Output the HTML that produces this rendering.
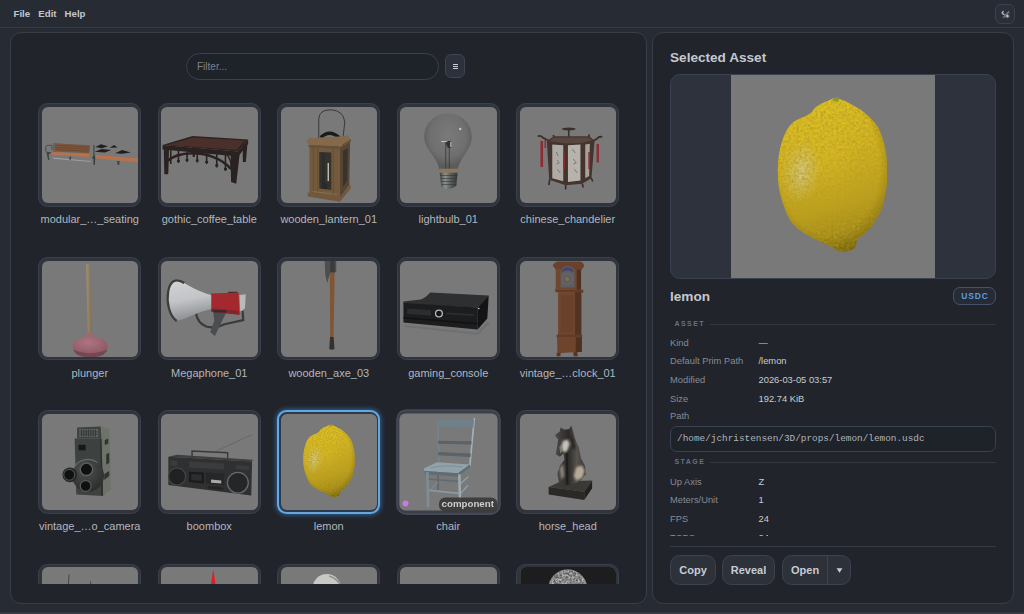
<!DOCTYPE html>
<html lang="en">
<head>
<meta charset="utf-8">
<title>Asset Browser</title>
<style>
*{box-sizing:border-box;margin:0;padding:0}
html,body{width:1024px;height:614px;overflow:hidden}
body{background:#272b34;font-family:"Liberation Sans",sans-serif;color:#c9cdd5;position:relative}
.menubar{position:absolute;left:0;top:0;width:1024px;height:28px;border-bottom:1px solid #343a46;background:#272b34}
.menubar span{position:absolute;top:7.500px;font-size:9.700px;line-height:11px;font-weight:bold;color:#c2c6cd}
.themebtn{position:absolute;left:995px;top:4px;width:20px;height:20px;border:1px solid #3c414d;border-radius:6px;background:#2b2f39}
.themebtn svg{position:absolute;left:5px;top:4.500px;width:9px;height:9px}
.panel{position:absolute;top:32px;height:571.500px;background:#21242a;border:1px solid #393d48;border-radius:11px}
#left{left:10px;width:637px}
#right{left:652px;width:362px}
.statusbar{position:absolute;left:0;top:612px;width:1024px;height:2px;background:linear-gradient(#2e313a,#3c3e49)}
.filter{position:absolute;left:186px;top:53px;width:253px;height:27px;border:1px solid #3a4150;border-radius:14px;background:#1e2229;font-size:10px;color:#7b818d;line-height:25px;padding-left:10px}
.mbtn{position:absolute;left:445px;top:54px;width:20px;height:24px;border:1px solid #3d4454;border-radius:6px;background:#2c313c}
.mbtn i{position:absolute;left:7px;width:5px;height:1px;background:#c9cdd5}
.grid{position:absolute;left:11px;top:33px;width:635px;height:551px;overflow:hidden}
.card{position:absolute;width:103px;height:103.500px;border:1px solid #3c404b;border-radius:9.500px;background:#30343d;padding:2.750px 2.250px}
.card svg{display:block;width:96.500px;height:96px;background:#797979;border-radius:6px}
.card svg>g,.preview svg>g{filter:blur(.350px)}
.card.hov{border-color:#4f5460;background:#3b404b;transform:scale(1.012)}
.card.sel{border:2px solid #66a7dd;padding:1.750px 1.250px;background:#2b3a4d;box-shadow:0 0 5px 1px rgba(60,140,220,.6)}
.lbl{position:absolute;width:120px;text-align:center;font-size:11px;line-height:14px;color:#b2b6bf;white-space:nowrap}
.dot{position:absolute;left:5px;bottom:7px;width:6px;height:6px;border-radius:3px;background:#c67be0}
.tag{position:absolute;right:2.500px;bottom:2px;height:13.400px;width:58px;text-align:center;border-radius:6.500px;background:rgba(58,58,58,.92);color:#cfcfcf;font-size:9.600px;line-height:12.500px;font-weight:bold}
h2{position:absolute;left:670px;font-size:13.600px;font-weight:bold;color:#c4c8cf;line-height:16px;white-space:nowrap}
.preview{position:absolute;left:670px;top:74px;width:326px;height:205px;border:1px solid #3a4150;border-radius:10px;background:#2d323d;overflow:hidden}
.preview svg{position:absolute;left:60px;top:0;width:204px;height:204px;background:#797979}
.badge{position:absolute;left:953px;top:287px;width:43px;height:18px;border:1px solid #47526a;border-radius:7px;background:#262b35;color:#5b9cd8;font-size:8.5px;font-weight:bold;letter-spacing:.9px;text-align:center;line-height:16px;padding-left:1px}
.sec{position:absolute;left:674.500px;font-size:7px;font-weight:bold;letter-spacing:1.450px;color:#6a707c;line-height:10px}
.sec:after{content:"";position:absolute;left:35.500px;top:5px;width:286px;height:1px;background:#323742}
.k,.v{position:absolute;font-size:9.35px;line-height:12px;white-space:nowrap}
.k{left:670px;color:#858b97}
.v{left:758.500px;color:#c9ccd3}
.path{position:absolute;left:670px;top:425.500px;width:326px;height:26px;border:1px solid #3a4150;border-radius:7px;background:#1e2229;font-family:"Liberation Mono",monospace;font-size:9.400px;color:#b0b5bf;line-height:24px;padding-left:6px;white-space:nowrap}
.clip{position:absolute;left:660px;top:300px;width:346px;height:235.500px;overflow:hidden}
.hr{position:absolute;left:670px;top:546px;width:326px;height:1px;background:#343a46}
.btn{position:absolute;top:555px;height:30px;border:1px solid #3c424f;border-radius:9.500px;background:#2c313a;color:#c9ccd3;font-size:11px;font-weight:bold;line-height:28px;text-align:center}
</style>
</head>
<body>
<div class="menubar"><span style="left:13.500px">File</span><span style="left:38.300px">Edit</span><span style="left:64.500px">Help</span></div>
<div class="themebtn"><svg viewBox="0 0 12 12"><path d="M4.400 1.200A2.700 2.700 0 1 0 5.600 5.400 2.200 2.200 0 0 1 4.400 1.200z" fill="#aeb2ba"/><circle cx="8.600" cy="8.200" r="1.500" fill="#d3d6dc"/><path d="M8.600 5.300v5.800M5.700 8.200h5.800M6.600 6.200l4 4M10.600 6.200l-4 4" stroke="#b9bdc5" stroke-width=".6"/><path d="M10.400 1.600L2.600 9.800M11.200 2.600L3.600 10.800" stroke="#c3c6cd" stroke-width=".75"/></svg></div>
<div class="panel" id="left"></div>
<div class="panel" id="right"></div>
<div class="filter">Filter...</div>
<div class="mbtn"><i style="top:9px"></i><i style="top:11px"></i><i style="top:13px"></i></div>
<div class="grid" id="grid">
<div class="card" style="left:27.25px;top:70.25px"><svg viewBox="0 0 96 96"><g>
<path d="M3.5 44.5V40.2Q3.5 38.3 5.5 38.3H9.6V43" fill="none" stroke="#4a4e4e" stroke-width="1"/>
<path d="M4 44.5L9.5 45.5 6.5 47.5 7.2 53H5.8L4.6 47z" fill="#3c4542"/>
<path d="M12.5 36.3L47.7 38.3 47 46.2 12.5 44.6z" fill="#7b553c"/>
<path d="M12.5 38.3L47.5 40.2M12.5 40.4L47.3 42.2M12.5 42.5L47.1 44.2" stroke="#5e3f2c" stroke-width=".5"/>
<path d="M11.6 36V45" stroke="#54575a" stroke-width="1.1"/>
<path d="M9.4 45L47 47 47 49.9 9.4 47.7z" fill="#b6714d"/>
<path d="M11 50.6L48.5 54 48.5 55 11 51.8z" fill="#9ba19d"/>
<path d="M27.5 49.5L29 49.6 28.3 53.2 26.8 52z" fill="#3c4542"/>
<path d="M51.6 38V49" stroke="#4a4a4c" stroke-width="1.3"/>
<path d="M49.5 50.5L53.5 47.6 53 51 52.6 58H51.4L51.2 52z" fill="#34403c"/>
<path d="M53 47.7L95.6 51.4V55.2L53 51.2z" fill="#b6714d"/>
<path d="M74.5 54L77.5 54.3 76.9 58H75.6z" fill="#3c4542"/>
<path d="M53.2 40L58.7 37.2 65.7 39.2 59.5 41.2z" fill="#1f1f20"/>
<path d="M52.4 44.8L59.5 42 69 43 62.6 45.6z" fill="#1f1f20"/>
<path d="M67.3 40.8L72 38 75.2 40.5z" fill="#1f1f20"/>
<path d="M72.8 46.3L79.8 43 88.6 45.5 80 46.8z" fill="#1f1f20"/>
</g></svg></div>
<div class="lbl" style="left:18.75px;top:179px">modular_…_seating</div>
<div class="card" style="left:146.75px;top:70.25px"><svg viewBox="0 0 96 96"><g>
<path d="M81.4 38L86.3 36 84.6 55H81.6z" fill="#2a2221"/>
<path d="M31 40L34 40 33.5 50H31.5z" fill="#2a2221"/>
<path d="M1.3 38L31.3 29 86.9 32.4 76.7 44.6z" fill="#2c2321"/>
<path d="M6 38L32 30.4 83.5 33.4 75.5 43z" fill="#4b2f2a"/>
<path d="M1.3 38L76.7 44.6 86.9 32.4V36.800L76.7 49.600 1.3 42.600z" fill="#2a2221"/>
<path d="M2.5 41L7.8 42 7 67.3H3.1z" fill="#2a2322"/>
<path d="M69.4 47L78.4 47 75 76.7 69.8 75z" fill="#2a2221"/>
<path d="M4.7 55Q14 46.5 31 46.3 55 46.5 70 62" fill="none" stroke="#2a2221" stroke-width="2.6"/>
<path d="M9.5 43V57M17.2 44V56M25.8 44.5V55M36 45.5V55.5M45.4 46.5V57M55.5 47V60.5M64.2 47.5V64" stroke="#2a2221" stroke-width="1.6"/>
<path d="M15.8 54h2.8M24.4 53h2.8M34.6 53.5h2.8M44 55h2.8M54 58.5h3M62.7 62h3" stroke="#2a2221" stroke-width="2.2"/>
<path d="M65 47Q70 52 70 60M78 47Q80 44 82 40" stroke="#2a2221" stroke-width="1.5" fill="none"/>
</g></svg></div>
<div class="lbl" style="left:138.25px;top:179px">gothic_coffee_table</div>
<div class="card" style="left:266.25px;top:70.25px"><svg viewBox="0 0 96 96"><g>
<path d="M37.5 31V12Q38 2.5 50 2.8 62 3.5 63.6 15L61.8 30" fill="none" stroke="#2b2a29" stroke-width=".8"/>
<path d="M39.5 30.5Q48 22 58 30.5" fill="none" stroke="#1b1b1c" stroke-width="3.2"/>
<path d="M58.7 39L68.9 33 68 78.2 58.7 90.8z" fill="#574532"/>
<path d="M61.8 43.8L66.5 41.2 66 73.5 61.8 80z" fill="#353430"/>
<path d="M28.2 37.5L58.7 39V90.8L28.2 86.8z" fill="#735a3d"/>
<path d="M38 45L50 45.6V83L38 81.6z" fill="#33322f"/>
<path d="M42 46V82" stroke="#2d2c29" stroke-width="3"/>
<path d="M47 56V74" stroke="#cfccbc" stroke-width="1.3"/>
<path d="M41 76Q44 73 46 78V82L41 81z" fill="#2a2927"/>
<path d="M32 39V87M36.5 40V88M52 41V89" stroke="#5d4930" stroke-width=".6"/>
<path d="M31 84.5L56 87.5" stroke="#9a8262" stroke-width=".5"/>
<path d="M25 33.6L29 31.3 65 29 69.6 32 58.7 39.5 27.4 38z" fill="#84694a"/>
<path d="M27.4 38L58.7 39.5 69.6 32V34.5L58.7 42 27.4 40.3z" fill="#65503a"/>
<circle cx="29.5" cy="32" r="1.6" fill="#84694a"/><circle cx="65.5" cy="29.5" r="1.6" fill="#84694a"/><circle cx="59" cy="38" r="1.6" fill="#8a6f4e"/>
<path d="M26.6 85.6L58.7 90.4 69.4 77.5V81.5L58.7 94.8 26.6 89.5z" fill="#70583c"/>
</g></svg></div>
<div class="lbl" style="left:257.75px;top:179px">wooden_lantern_01</div>
<div class="card" style="left:385.75px;top:70.25px"><svg viewBox="0 0 96 96"><g>
<defs><radialGradient id="bg1" cx=".5" cy=".4" r=".55"><stop offset="0" stop-color="#7a7a7a"/><stop offset=".7" stop-color="#6f6f6f"/><stop offset="1" stop-color="#5b5b5b"/></radialGradient>
<linearGradient id="bg2" x1="0" x2="1"><stop offset="0" stop-color="#3f4343"/><stop offset=".3" stop-color="#8b9090"/><stop offset=".6" stop-color="#5a5f5f"/><stop offset="1" stop-color="#343737"/></linearGradient></defs>
<path d="M47.7 6.5C61 6.5 71.5 17 71.5 30 71.5 42 60 50 57.5 62H39C37 50 24 42 24 30 24 17 34.500 6.500 47.700 6.500z" fill="url(#bg1)"/>
<path d="M45.5 36V62M49 38V62" stroke="#3a3a3a" stroke-width=".9"/>
<path d="M44.500 34h6v7h-3z" fill="#333"/>
<path d="M41 34.500h6M50.500 35v5" stroke="#d8d8d8" stroke-width=".8"/>
<circle cx="60" cy="22" r="1.200" fill="#c9c9c9"/>
<path d="M39.800 61.800H57.200L56.500 66H40.300z" fill="#8c775b"/>
<path d="M39.500 65.700H57.300L56 79Q49 84.500 41 80z" fill="url(#bg2)"/>
<path d="M40 68.500H57M40.300 71.500H56.800M40.600 74.500H56.500M41 77.500H56.200" stroke="#2f3232" stroke-width=".8" opacity=".7"/>
</g></svg></div>
<div class="lbl" style="left:377.25px;top:179px">lightbulb_01</div>
<div class="card" style="left:505.25px;top:70.25px"><svg viewBox="0 0 96 96"><g>
<ellipse cx="48.5" cy="22" rx="7" ry="1.5" fill="#3a302b"/>
<path d="M48.500 22.500V30" stroke="#3a302b" stroke-width="1.600"/>
<path d="M17.500 29.500Q20 28 22.500 30.500L29 34M82 30Q79 29 77 31.500L73 34M33 28l1 3M69 27.500l-.5 3" stroke="#3d2e29" stroke-width="1.800" fill="none"/>
<path d="M26.600 34L33.600 29.200 68.900 29.200 74.300 33.600 71.200 71.200 61.800 76.700 45.400 78.200 29 72.800z" fill="#44342d"/>
<path d="M33.600 30.500H68.500L72 33.500 61 36 44.600 36.500 29 34z" fill="#59473f"/>
<path d="M32 37.500L43 38.300V74.300L32 71.200z" fill="#aeaba6"/>
<path d="M47.700 38.300L60.200 37.500V73.500L47.700 75z" fill="#b6b3ad"/>
<path d="M65 37.500L69.600 36.800 68.900 68.900 65 71.200z" fill="#a5a29c"/>
<path d="M36 45l2 4M37 53l2 3-3 1M37 62l3 4M52 42l3 4M53 52l3 4-3 1M54 62l3 4" stroke="#6e6963" stroke-width=".8" fill="none"/>
<path d="M21.500 34V60" stroke="#8e2a31" stroke-width="2.600"/>
<path d="M25 33V41" stroke="#8e2a31" stroke-width="1.400"/>
<path d="M43.800 46V62" stroke="#8e2a31" stroke-width="1.800"/>
<path d="M68.800 45V62" stroke="#8e2a31" stroke-width="1.500"/>
<path d="M77.500 37V55.500" stroke="#8e2a31" stroke-width="2.400"/>
<path d="M29.500 72.500l-1 5.500M45.400 78V82.500M62 76.500l1 4M71 71l1.500 3.500" stroke="#3a2d28" stroke-width="1.600"/>
</g></svg></div>
<div class="lbl" style="left:496.75px;top:179px">chinese_chandelier</div>
<div class="card" style="left:27.25px;top:223.95px"><svg viewBox="0 0 96 96"><g>
<defs><linearGradient id="pl1" x1="0" x2="1"><stop offset="0" stop-color="#a3916f"/><stop offset="1" stop-color="#7f6e53"/></linearGradient>
<radialGradient id="pl2" cx=".45" cy=".3" r=".7"><stop offset="0" stop-color="#ad7581"/><stop offset="1" stop-color="#8a5662"/></radialGradient></defs>
<path d="M43.800 3.500Q45.700 2.500 47.600 3.500L49.600 73H45.600z" fill="url(#pl1)"/>
<path d="M44 72.500Q47.500 70.500 51 72.500L52 78H43z" fill="#a06672"/>
<path d="M30.500 85.500Q31 76.500 48 75.500 65 76.500 65.500 85.500 65 93.500 48 95 31 93.500 30.500 85.500z" fill="url(#pl2)"/>
<path d="M31 88.500Q48 96 65 88.500 63 96 48 96.500 33 96 31 88.500z" fill="#764753"/>
</g></svg></div>
<div class="lbl" style="left:18.75px;top:332.7px">plunger</div>
<div class="card" style="left:146.75px;top:223.95px"><svg viewBox="0 0 96 96"><g>
<defs><linearGradient id="mg1" x1="0" y1="0" x2=".2" y2="1"><stop offset="0" stop-color="#d2d4d6"/><stop offset=".55" stop-color="#c2c4c7"/><stop offset="1" stop-color="#8f9295"/></linearGradient></defs>
<path d="M34.800 52Q36 62 45 65.500 54 68 63.200 63.200L82 59.200 81.400 50" fill="none" stroke="#393b3e" stroke-width="2.200"/>
<path d="M52 50L64.800 52 59.200 63.200 53.700 75 49 71 53 60z" fill="#4b4d50"/>
<path d="M78.200 34L84.500 33.200 83.700 47.400 79 50.500z" fill="#b7b9bb"/>
<path d="M67 30.800H76V32.500H67z" fill="#2c2c2e"/>
<path d="M49.800 32.400L77.400 31.600 78.200 53.700 49.800 50.500z" fill="#a3292e"/>
<path d="M49.800 47L78 50 78.200 53.700 49.800 50.500z" fill="#86242a"/>
<path d="M52 49h13v2.500h-13z" fill="#3a2a2c"/>
<path d="M17 18.500C9 21 5 32 6.500 41 8 52 12 59 17 59.500 25 58 38 50 50 48.200V34C38 31 26 24 17 18.500z" fill="url(#mg1)"/>
<path d="M23 22C15 16.500 9 19.500 7 30 5 41 8 55 15.500 60" fill="none" stroke="#3a3c3e" stroke-width="2.200"/>
</g></svg></div>
<div class="lbl" style="left:138.25px;top:332.7px">Megaphone_01</div>
<div class="card" style="left:266.25px;top:223.95px"><svg viewBox="0 0 96 96"><g>
<path d="M48.500 8H53.500L52.200 78H49z" fill="#7f5535"/>
<path d="M48.800 76H52.400L53.200 88Q51 89.500 48 88z" fill="#34312e"/>
<path d="M43.500 0H55V11L52 12 49 11.500 46 22 44 14z" fill="#4c4e50"/>
<path d="M49 0H53.500V11H49z" fill="#3a3b3c"/>
</g></svg></div>
<div class="lbl" style="left:257.75px;top:332.7px">wooden_axe_03</div>
<div class="card" style="left:385.75px;top:223.95px"><svg viewBox="0 0 96 96"><g>
<path d="M4 64L77 71.500 88 60 89 63 78 74 5 66z" fill="#6a6a6a" opacity=".6"/>
<path d="M3.200 40.500L20.500 38.500Q25 37 30 31.400L88.500 34.500 77.400 46.600 3.200 43.500z" fill="#2d2f31"/>
<path d="M3.200 42L77.400 46.600V68.500L3.200 61.400z" fill="#1c1d1f"/>
<path d="M77.400 46.600L88.500 34.500 87 57.500 77.400 68.500z" fill="#131415"/>
<path d="M7 47.400L30.800 49V54.500L7 53z" fill="#2c2d30"/>
<path d="M46 51.500L74 53.300V55L46 53.200z" fill="#2c2d30"/>
<path d="M3.200 56L77.400 62V63.500L3.200 57.500z" fill="#111213"/>
<circle cx="38.700" cy="52.500" r="3.400" fill="#151516" stroke="#b4b4b4" stroke-width="1.400"/>
<circle cx="78.500" cy="47.500" r=".8" fill="#d0d0d0"/>
</g></svg></div>
<div class="lbl" style="left:377.25px;top:332.7px">gaming_console</div>
<div class="card" style="left:505.25px;top:223.95px"><svg viewBox="0 0 96 96"><g transform="translate(0 -1.800)">
<path d="M32.400 6.300Q35 2.500 38 2.400H60Q63 3 64 7L60.800 11 35.500 10.300z" fill="#6a412c"/>
<path d="M35.500 9.500L60.800 10.300V30.800L35.500 30z" fill="#70462e"/>
<path d="M56.500 10.200L60.800 10.300V30.800L56.500 30.600z" fill="#503222"/>
<path d="M40.300 28.400V13Q40.500 7 47.400 6.800 54.300 7 54.500 13V28.400z" fill="#5e5d61"/>
<path d="M41.300 13Q41.500 8 47.400 7.800 53.300 8 53.500 13 47.400 9.500 41.300 13z" fill="#46466a"/>
<circle cx="47" cy="19.700" r="2" fill="#7f7048"/>
<circle cx="47" cy="19.700" r="5.500" fill="none" stroke="#6c6a66" stroke-width="1"/>
<path d="M34.500 30L63 30.500V33.500L35.500 33z" fill="#623c28"/>
<path d="M37.800 33H61V76H37.800z" fill="#70462e"/>
<path d="M54.800 33H61V76H54.800z" fill="#523323"/>
<path d="M40.500 36H53V73H40.500z" fill="#6a412b"/>
<path d="M36.300 75.500H62V78.500H36.300z" fill="#623c28"/>
<path d="M36.800 78H61.600V92.600L37.200 94z" fill="#6e442d"/>
<path d="M55.500 78H61.600V92.600L55.500 93z" fill="#4e3020"/>
<path d="M36.500 93.500L40.500 93.800 40 97H36.500zM53 93l4-.3.500 4.300H53.500z" fill="#573523"/>
</g></svg></div>
<div class="lbl" style="left:496.75px;top:332.7px">vintage_…clock_01</div>
<div class="card" style="left:27.25px;top:377.25px"><svg viewBox="0 0 96 96"><g>
<defs><radialGradient id="cm1" cx=".4" cy=".3" r=".75"><stop offset="0" stop-color="#4d5150"/><stop offset=".6" stop-color="#383b3a"/><stop offset="1" stop-color="#2a2c2b"/></radialGradient></defs>
<path d="M59.200 12.600L67.100 15 68.700 75.800 60.800 82z" fill="#6d7369"/>
<path d="M62.500 26l3.500-1.500v5L62.500 31zM64 40l3-1v10l-3 1.500zM62 60l5-3v5l-5 4z" fill="#30332f"/>
<path d="M34.800 13.400L58.500 12.600 59.200 24.500H34.800z" fill="#3e4340"/>
<path d="M37 15.200H56V22.800H37z" fill="#6c726c"/>
<path d="M37 17.100h19M37 19h19M37 20.900h19M39.300 15.200v7.600M41.600 15.200v7.600M43.900 15.200v7.600M46.200 15.200v7.600M48.500 15.200v7.600M50.800 15.200v7.600M53.100 15.200v7.600" stroke="#363a37" stroke-width="1"/>
<path d="M32.400 24.500H59.200L60.800 82 34 80.600z" fill="#3d4240"/>
<path d="M58 24.500H59.200L60.800 82 59 81z" fill="#2c2f2d"/>
<path d="M36.300 30.800H43.400V36.300H36.300z" fill="#171918"/>
<circle cx="45.800" cy="61.600" r="16" fill="url(#cm1)"/>
<path d="M31 55A16 16 0 0 1 55 48.500" fill="none" stroke="#696e6b" stroke-width="1.200"/>
<circle cx="27.600" cy="60.800" r="7.400" fill="#262828"/>
<circle cx="27" cy="60.800" r="5.400" fill="#0f1010" stroke="#5a5e5c" stroke-width=".9"/>
<circle cx="44.200" cy="55.300" r="6.200" fill="#0f1010" stroke="#5d615f" stroke-width="1.300"/>
<circle cx="43.400" cy="72" r="5.400" fill="#0f1010" stroke="#585c5a" stroke-width="1.200"/>
</g></svg></div>
<div class="lbl" style="left:18.75px;top:486px">vintage_…o_camera</div>
<div class="card" style="left:146.75px;top:377.25px"><svg viewBox="0 0 96 96"><g>
<path d="M55.300 37L90.800 20.500" stroke="#5c5c5c" stroke-width=".6"/>
<path d="M30.800 43V37L66.400 38.700V45.500" fill="none" stroke="#38393a" stroke-width="1.400"/>
<path d="M7.100 42.700L15.800 40.800 91.600 45.800 90.800 47.600z" fill="#3d3e3f"/>
<path d="M7.100 42.700L90.800 47.400 90 81.400 7.100 71z" fill="#2f3031"/>
<path d="M28 47.500L63 49.500V55.500L28 53.500z" fill="#3b3c3d"/>
<path d="M9 46.500L16 47V52L9 51.500zM75 51L88 52V56L75 55z" fill="#3a3b3c"/>
<circle cx="15.800" cy="62.400" r="8.600" fill="#202121" stroke="#454647" stroke-width="1.200"/>
<circle cx="76.600" cy="68.700" r="10.400" fill="#252627" stroke="#68696a" stroke-width="1.300"/>
<path d="M27.600 57.700L42.700 58.500V69.500L27.600 68z" fill="#1b1b1c"/>
<path d="M30 60L40.500 60.600V67L30 66z" fill="#2c2d2e"/>
<path d="M44.500 58.500L63 59.500V71L44.500 69.500z" fill="#262728"/>
<path d="M49.800 65.600L60 66.400V69.500L49.800 68.700z" fill="#a9a9a9"/>
<path d="M47 72L62 73.500V76L47 74.500z" fill="#232425"/>
</g></svg></div>
<div class="lbl" style="left:138.25px;top:486px">boombox</div>
<div class="card sel" style="left:266.25px;top:377.25px"><svg viewBox="0 0 96 96"><g>
<defs>
<linearGradient id="lm0" x1=".4" y1="0" x2=".6" y2="1"><stop offset="0" stop-color="#e8cb26"/><stop offset=".35" stop-color="#dcbb22"/><stop offset=".7" stop-color="#c2a31c"/><stop offset=".9" stop-color="#a28a17"/><stop offset="1" stop-color="#857413"/></linearGradient>
<radialGradient id="lm1" cx=".47" cy=".45" r=".56"><stop offset="0" stop-color="#000" stop-opacity="0"/><stop offset=".75" stop-color="#5a4800" stop-opacity=".05"/><stop offset="1" stop-color="#5a4800" stop-opacity=".42"/></radialGradient>
<radialGradient id="lm2" cx=".5" cy=".5" r=".5"><stop offset="0" stop-color="#d9d4a4" stop-opacity=".85"/><stop offset=".6" stop-color="#d8cc88" stop-opacity=".4"/><stop offset="1" stop-color="#d9d29a" stop-opacity="0"/></radialGradient>
<filter id="lmf" x="0" y="0" width="1" height="1"><feTurbulence type="fractalNoise" baseFrequency=".8" numOctaves="2" seed="3"/><feColorMatrix values="0 0 0 0 0.5  0 0 0 0 0.36  0 0 0 0 0.02  1.2 1.2 0 0 -0.88"/><feComposite in2="SourceGraphic" operator="in"/></filter>
<clipPath id="lmc"><path d="M49.3 10.8C50.5 10.8 51.7 11.5 53.0 12.0C54.3 12.5 55.3 13.1 56.9 14.0C58.5 14.9 60.3 15.6 62.4 17.4C64.5 19.2 67.6 21.8 69.3 24.9C71.0 28.0 72.1 32.1 72.8 36.0C73.5 39.9 73.4 45.7 73.4 48.5C73.5 51.3 73.5 50.5 73.1 53.0C72.6 55.5 72.0 60.1 70.7 63.3C69.4 66.5 67.0 70.0 65.2 72.3C63.4 74.5 61.0 75.6 60.0 76.8C59.0 78.0 59.2 78.7 58.9 79.5C58.6 80.3 59.0 81.0 58.0 81.6C57.0 82.2 54.4 83.3 52.8 83.3C51.2 83.3 49.8 82.4 48.5 81.8C47.2 81.2 47.1 80.9 45.2 79.9C43.3 78.9 39.5 77.4 36.9 75.8C34.2 74.2 31.4 72.8 29.3 70.3C27.2 67.8 25.7 64.2 24.5 60.6C23.3 57.0 22.3 52.9 22.1 48.6C21.9 44.3 22.1 38.9 23.1 34.7C24.1 30.5 25.6 26.3 27.9 23.6C30.2 20.9 35.0 19.8 36.9 18.4C38.8 17.0 38.7 16.2 39.5 15.5C40.3 14.8 40.7 14.6 41.7 14.0C42.7 13.4 44.2 12.7 45.5 12.2C46.8 11.7 48.0 10.8 49.3 10.8z"/></clipPath>
</defs>
<path d="M49.3 10.8C50.5 10.8 51.7 11.5 53.0 12.0C54.3 12.5 55.3 13.1 56.9 14.0C58.5 14.9 60.3 15.6 62.4 17.4C64.5 19.2 67.6 21.8 69.3 24.9C71.0 28.0 72.1 32.1 72.8 36.0C73.5 39.9 73.4 45.7 73.4 48.5C73.5 51.3 73.5 50.5 73.1 53.0C72.6 55.5 72.0 60.1 70.7 63.3C69.4 66.5 67.0 70.0 65.2 72.3C63.4 74.5 61.0 75.6 60.0 76.8C59.0 78.0 59.2 78.7 58.9 79.5C58.6 80.3 59.0 81.0 58.0 81.6C57.0 82.2 54.4 83.3 52.8 83.3C51.2 83.3 49.8 82.4 48.5 81.8C47.2 81.2 47.1 80.9 45.2 79.9C43.3 78.9 39.5 77.4 36.9 75.8C34.2 74.2 31.4 72.8 29.3 70.3C27.2 67.8 25.7 64.2 24.5 60.6C23.3 57.0 22.3 52.9 22.1 48.6C21.9 44.3 22.1 38.9 23.1 34.7C24.1 30.5 25.6 26.3 27.9 23.6C30.2 20.9 35.0 19.8 36.9 18.4C38.8 17.0 38.7 16.2 39.5 15.5C40.3 14.8 40.7 14.6 41.7 14.0C42.7 13.4 44.2 12.7 45.5 12.2C46.8 11.7 48.0 10.8 49.3 10.8z" fill="url(#lm0)"/>
<g clip-path="url(#lmc)">
<ellipse cx="33" cy="45.500" rx="9" ry="15" fill="url(#lm2)" transform="rotate(8 33 45.500)"/>
<rect x="20" y="9" width="56" height="76" fill="#fff" filter="url(#lmf)"/>
<rect x="20" y="9" width="56" height="76" fill="url(#lm1)"/>
</g>
<path d="M47.800 12Q48.600 9.800 50.800 10.600L50.600 12.600z" fill="#8a9636"/>
</g></svg></div>
<div class="lbl" style="left:257.75px;top:486px">lemon</div>
<div class="card hov" style="left:385.75px;top:377.25px"><svg viewBox="0 0 96 96"><g>
<path d="M37 59H38.800V76H37z" fill="#5d6b71"/>
<path d="M68 53H69.700L67.300 79H65.800z" fill="#6d7d84"/>
<path d="M37.600 6.300L38.900 47.500" stroke="#74858d" stroke-width="1.500"/>
<path d="M73.800 4.700L69.300 52" stroke="#a2b2b9" stroke-width="1.600"/>
<path d="M37 6.300H73.500L72.700 14.200 37.600 13.400z" fill="#6f8088"/>
<path d="M38 26.900L71 27.600 70.800 30.800 38 30z" fill="#596369"/>
<path d="M38 38L70.300 39.500 70 43 38.200 41.400z" fill="#596369"/>
<path d="M60 69.500L68 62.400M60.300 79L67.500 71" stroke="#8fa0a7" stroke-width="1.300"/>
<path d="M27.600 64.800L57.700 67.100" stroke="#5f6d73" stroke-width="1.600"/>
<path d="M28.400 75.800L58.500 79" stroke="#8b9ca3" stroke-width="1.500"/>
<path d="M30 76L37.500 68" stroke="#7b8b92" stroke-width="1.200"/>
<path d="M23.700 54.500L37 48.200 69.500 50.500 57.700 59.200 24.500 57z" fill="#91a2aa"/>
<path d="M30 54Q45 50 62 53" stroke="#7a8a92" stroke-width=".8" fill="none"/>
<path d="M24.500 57L57.700 59.200 69.500 50.500V53L57.700 62.500 25 60z" fill="#5f6d73"/>
<path d="M26 58H28.600L29.400 92.400H27z" fill="#7d8e96"/>
<path d="M57.700 60H60.200L61 92H58.500z" fill="#9aabb2"/>
</g></svg><b class="dot"></b><b class="tag">component</b></div>
<div class="lbl" style="left:377.25px;top:486px">chair</div>
<div class="card" style="left:505.25px;top:377.25px"><svg viewBox="0 0 96 96"><g>
<defs><linearGradient id="hs1" x1="0" x2="1"><stop offset="0" stop-color="#4d4a46"/><stop offset=".42" stop-color="#2b2a29"/><stop offset=".7" stop-color="#57524b"/><stop offset="1" stop-color="#3a3836"/></linearGradient>
<filter id="hsb" x="-.3" y="-.3" width="1.600" height="1.600"><feGaussianBlur stdDeviation="1.100"/></filter></defs>
<path d="M28.400 73L40.300 67.600 71.900 66.400 64 77.700z" fill="#3b3836"/>
<path d="M28.400 73L64 77.700V86L28.400 80.600z" fill="#2b2928"/>
<path d="M64 77.700L71.900 66.400V74.200L64 86z" fill="#21201f"/>
<path d="M35.500 20.500L39.500 17.400 40.300 13.400 44.200 15.800 49 15 50.900 11.400 52.900 17.400 54.500 23.700 58.500 33.200 60.800 44.200 64.800 52.100 65.600 60 60.800 66.400 52.100 70.300 44.200 71.900 38.700 68 37.100 60 39.500 52.100 44.200 45.800 43.400 39.500 39.500 42.700 35.500 40.300 37.100 31.600 37.900 25.300 35 22.100z" fill="url(#hs1)"/>
<g filter="url(#hsb)">
<path d="M42.500 27L47.500 25.500 49.500 30 47 37 43.500 38.500 41 34z" fill="#c4c0b6"/>
<path d="M56 53L62 51.500 64.500 57 62 64 56 66.500 53.500 62z" fill="#b5a998"/>
<path d="M39.500 54L43 50 44 62 41 66z" fill="#8c8780"/>
<path d="M50 20l3 6 2 10-3-2z" fill="#1c1b1a"/>
</g>
<path d="M45.500 40L47.500 39 48 70 46 71z" fill="#1f1e1d"/>
<path d="M39 33L41.500 30 43 36 40 39.500z" fill="#8b8780" opacity=".7"/>
</g></svg></div>
<div class="lbl" style="left:496.75px;top:486px">horse_head</div>
<div class="card" style="left:27.25px;top:530.55px"><svg viewBox="0 0 96 96"><g><path d="M26.800 7.500L26.200 17M48 14.500l.5 3" stroke="#3a3a3a" stroke-width=".8"/></g></svg></div>
<div class="card" style="left:146.75px;top:530.55px"><svg viewBox="0 0 96 96"><g><path d="M52 2L49.300 20H54.700z" fill="#df1f22"/></g></svg></div>
<div class="card" style="left:266.25px;top:530.55px"><svg viewBox="0 0 96 96"><g><ellipse cx="45.500" cy="21" rx="14" ry="14" fill="#c9c9c4"/><path d="M48 9Q58 12 60 22" stroke="#8f8f8a" stroke-width="1.500" fill="none"/></g></svg></div>
<div class="card" style="left:385.75px;top:530.55px"><svg viewBox="0 0 96 96"><g></g></svg></div>
<div class="card" style="left:505.25px;top:530.55px"><svg viewBox="0 0 96 96"><g><defs><filter id="r4f" x="0" y="0" width="1" height="1"><feTurbulence type="fractalNoise" baseFrequency=".5" numOctaves="2" seed="5"/><feColorMatrix values="0 0 0 0 0.1  0 0 0 0 0.1  0 0 0 0 0.1  1.6 1.6 0 0 -1.1"/><feComposite in2="SourceGraphic" operator="in"/></filter></defs><rect width="96" height="96" fill="#1d1d1f"/><circle cx="47.500" cy="22" r="19.500" fill="#b5b5b5"/><circle cx="47.500" cy="22" r="19.500" fill="#fff" filter="url(#r4f)"/></g></svg></div>
</div>
<h2 style="top:50.400px">Selected Asset</h2>
<div class="preview"><svg viewBox="0 0 96 96"><g>
<defs>
<linearGradient id="biglm0" x1=".4" y1="0" x2=".6" y2="1"><stop offset="0" stop-color="#e8cb26"/><stop offset=".35" stop-color="#dcbb22"/><stop offset=".7" stop-color="#c2a31c"/><stop offset=".9" stop-color="#a28a17"/><stop offset="1" stop-color="#857413"/></linearGradient>
<radialGradient id="biglm1" cx=".47" cy=".45" r=".56"><stop offset="0" stop-color="#000" stop-opacity="0"/><stop offset=".75" stop-color="#5a4800" stop-opacity=".05"/><stop offset="1" stop-color="#5a4800" stop-opacity=".42"/></radialGradient>
<radialGradient id="biglm2" cx=".5" cy=".5" r=".5"><stop offset="0" stop-color="#d9d4a4" stop-opacity=".85"/><stop offset=".6" stop-color="#d8cc88" stop-opacity=".4"/><stop offset="1" stop-color="#d9d29a" stop-opacity="0"/></radialGradient>
<filter id="biglmf" x="0" y="0" width="1" height="1"><feTurbulence type="fractalNoise" baseFrequency=".8" numOctaves="2" seed="3"/><feColorMatrix values="0 0 0 0 0.5  0 0 0 0 0.36  0 0 0 0 0.02  1.2 1.2 0 0 -0.88"/><feComposite in2="SourceGraphic" operator="in"/></filter>
<clipPath id="biglmc"><path d="M49.3 10.8C50.5 10.8 51.7 11.5 53.0 12.0C54.3 12.5 55.3 13.1 56.9 14.0C58.5 14.9 60.3 15.6 62.4 17.4C64.5 19.2 67.6 21.8 69.3 24.9C71.0 28.0 72.1 32.1 72.8 36.0C73.5 39.9 73.4 45.7 73.4 48.5C73.5 51.3 73.5 50.5 73.1 53.0C72.6 55.5 72.0 60.1 70.7 63.3C69.4 66.5 67.0 70.0 65.2 72.3C63.4 74.5 61.0 75.6 60.0 76.8C59.0 78.0 59.2 78.7 58.9 79.5C58.6 80.3 59.0 81.0 58.0 81.6C57.0 82.2 54.4 83.3 52.8 83.3C51.2 83.3 49.8 82.4 48.5 81.8C47.2 81.2 47.1 80.9 45.2 79.9C43.3 78.9 39.5 77.4 36.9 75.8C34.2 74.2 31.4 72.8 29.3 70.3C27.2 67.8 25.7 64.2 24.5 60.6C23.3 57.0 22.3 52.9 22.1 48.6C21.9 44.3 22.1 38.9 23.1 34.7C24.1 30.5 25.6 26.3 27.9 23.6C30.2 20.9 35.0 19.8 36.9 18.4C38.8 17.0 38.7 16.2 39.5 15.5C40.3 14.8 40.7 14.6 41.7 14.0C42.7 13.4 44.2 12.7 45.5 12.2C46.8 11.7 48.0 10.8 49.3 10.8z"/></clipPath>
</defs>
<path d="M49.3 10.8C50.5 10.8 51.7 11.5 53.0 12.0C54.3 12.5 55.3 13.1 56.9 14.0C58.5 14.9 60.3 15.6 62.4 17.4C64.5 19.2 67.6 21.8 69.3 24.9C71.0 28.0 72.1 32.1 72.8 36.0C73.5 39.9 73.4 45.7 73.4 48.5C73.5 51.3 73.5 50.5 73.1 53.0C72.6 55.5 72.0 60.1 70.7 63.3C69.4 66.5 67.0 70.0 65.2 72.3C63.4 74.5 61.0 75.6 60.0 76.8C59.0 78.0 59.2 78.7 58.9 79.5C58.6 80.3 59.0 81.0 58.0 81.6C57.0 82.2 54.4 83.3 52.8 83.3C51.2 83.3 49.8 82.4 48.5 81.8C47.2 81.2 47.1 80.9 45.2 79.9C43.3 78.9 39.5 77.4 36.9 75.8C34.2 74.2 31.4 72.8 29.3 70.3C27.2 67.8 25.7 64.2 24.5 60.6C23.3 57.0 22.3 52.9 22.1 48.6C21.9 44.3 22.1 38.9 23.1 34.7C24.1 30.5 25.6 26.3 27.9 23.6C30.2 20.9 35.0 19.8 36.9 18.4C38.8 17.0 38.7 16.2 39.5 15.5C40.3 14.8 40.7 14.6 41.7 14.0C42.7 13.4 44.2 12.7 45.5 12.2C46.8 11.7 48.0 10.8 49.3 10.8z" fill="url(#biglm0)"/>
<g clip-path="url(#biglmc)">
<ellipse cx="33" cy="45.500" rx="9" ry="15" fill="url(#biglm2)" transform="rotate(8 33 45.500)"/>
<rect x="20" y="9" width="56" height="76" fill="#fff" filter="url(#biglmf)"/>
<rect x="20" y="9" width="56" height="76" fill="url(#biglm1)"/>
</g>
<path d="M47.800 12Q48.600 9.800 50.800 10.600L50.600 12.600z" fill="#8a9636"/>
</g></svg></div>
<h2 style="top:289px">lemon</h2>
<div class="badge">USDC</div>
<div class="sec" style="top:318.500px">ASSET</div>
<div class="k" style="top:336.500px">Kind</div><div class="v" style="top:336.500px">—</div>
<div class="k" style="top:355px">Default Prim Path</div><div class="v" style="top:355px">/lemon</div>
<div class="k" style="top:374px">Modified</div><div class="v" style="top:374px">2026-03-05 03:57</div>
<div class="k" style="top:392.5px">Size</div><div class="v" style="top:392.5px">192.74 KiB</div>
<div class="k" style="top:410px">Path</div>
<div class="path">/home/jchristensen/3D/props/lemon/lemon.usdc</div>
<div class="sec" style="top:457px">STAGE</div>
<div class="k" style="top:475.5px">Up Axis</div><div class="v" style="top:475.5px">Z</div>
<div class="k" style="top:494px">Meters/Unit</div><div class="v" style="top:494px">1</div>
<div class="k" style="top:513px">FPS</div><div class="v" style="top:513px">24</div>
<div class="clip"><div class="k" style="left:10px;top:231.5px">TCPS</div><div class="v" style="left:98.5px;top:231.5px">24</div></div>
<div class="hr"></div>
<div class="btn" style="left:670px;width:46px">Copy</div>
<div class="btn" style="left:722px;width:53px">Reveal</div>
<div class="btn" style="left:782px;width:69px;text-align:left;padding-left:8px">Open<i style="position:absolute;left:44px;top:0;width:1px;height:28px;background:#3c4353"></i><svg style="position:absolute;left:52.500px;top:10.500px;width:7px;height:7px" viewBox="0 0 6 6"><path d="M.5 1h5L3 5z" fill="#c9ccd3"/></svg></div>
<div class="statusbar"></div>
</body>
</html>
